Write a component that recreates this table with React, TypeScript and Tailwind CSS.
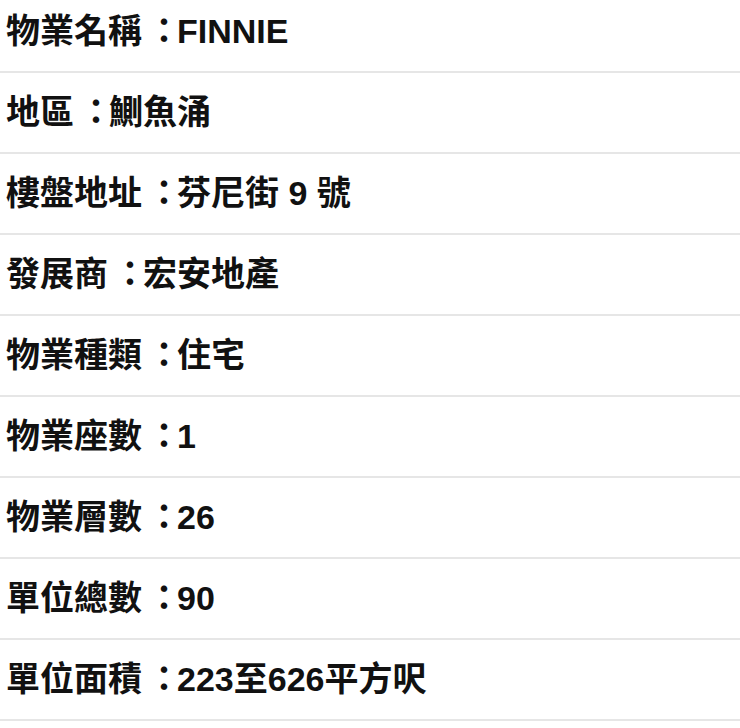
const rows = [
  ["物業名稱", "FINNIE"],
  ["地區", "鰂魚涌"],
  ["樓盤地址", "芬尼街 9 號"],
  ["發展商", "宏安地產"],
  ["物業種類", "住宅"],
  ["物業座數", "1"],
  ["物業層數", "26"],
  ["單位總數", "90"],
  ["單位面積", "223至626平方呎"],
]

export default function App() {
  return (
    <div lang="zh-TW" className="h-[728px] w-[740px] overflow-hidden bg-white">
      <div className="-mt-2">
        {rows.map(([label, value]) => (
          <div
            key={label}
            className="flex h-[81px] items-center border-b-2 border-[#e6e6e6] px-1.5 text-[34px] font-semibold text-[#111]"
            style={{ fontFamily: '"Liberation Sans", "Noto Sans CJK TC", sans-serif' }}
          >
            <span className="whitespace-nowrap">
              {label}
              <span className="inline-block w-[35px] pl-[5px]">：</span>
              {value}
            </span>
          </div>
        ))}
      </div>
    </div>
  )
}
